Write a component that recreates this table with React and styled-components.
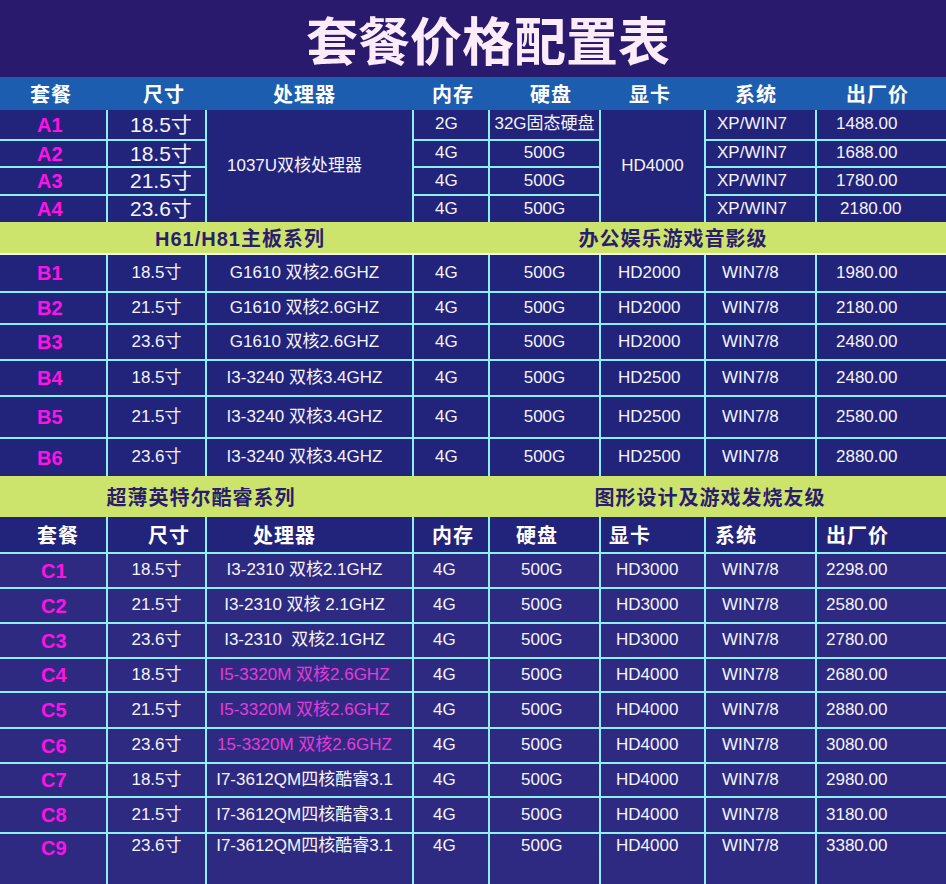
import React from 'react';
import styled, { createGlobalStyle } from 'styled-components';

const GlobalStyle = createGlobalStyle`
  html, body { margin: 0; padding: 0; background: #2a1a6e; }
  body { font-family: "Liberation Sans", "Noto Sans CJK SC", sans-serif; }
  * { box-sizing: border-box; }
`;

const COLS = '106px 97px 205px 74px 109px 103px 109px 129px';

const Page = styled.div`
  width: 946px;
  height: 884px;
  display: flex;
  flex-direction: column;
  overflow: hidden;
  background: #2a1a6e;
`;

const Title = styled.h1`
  margin: 0;
  height: 77px;
  flex: none;
  display: flex;
  align-items: center;
  justify-content: center;
  padding-left: 30px;
  font-family: "Noto Sans CJK SC", sans-serif;
  font-weight: 700;
  font-size: 52px;
  line-height: 1;
  color: #fcecf9;
`;

const HeadBand = styled.div`
  flex: none;
  display: grid;
  grid-template-columns: ${COLS};
  column-gap: 2px;
  height: 33px;
  background: #1c5daf;
`;

const Grid = styled.div`
  flex: none;
  display: grid;
  grid-template-columns: ${COLS};
  grid-template-rows: ${(p) => p.$rows};
  gap: 2px;
  background: #8df0f3;
`;

const Cell = styled.div`
  display: flex;
  align-items: ${(p) => (p.$top ? 'flex-start' : 'center')};
  justify-content: ${(p) => (p.$pl == null ? 'center' : 'flex-start')};
  padding-left: ${(p) => p.$pl ?? 0}px;
  padding-right: ${(p) => p.$pr ?? 0}px;
  padding-top: ${(p) => (p.$top ? 2 : 0)}px;
  background: ${(p) => p.$bg || '#22237b'};
  grid-row: ${(p) => (p.$span ? `span ${p.$span}` : 'auto')};
  white-space: pre;
  line-height: 1.2;
`;

const Code = styled(Cell)`
  font-family: "Liberation Sans", sans-serif;
  font-weight: 700;
  font-size: 20px;
  color: #ff12e4;
`;

const Value = styled(Cell)`
  font-family: "Liberation Sans", "Noto Sans CJK SC", sans-serif;
  font-size: ${(p) => (p.$big ? 21 : 17)}px;
  color: ${(p) => (p.$pink ? '#e63ad8' : '#f4f4fb')};
`;

const HeadCell = styled(Cell)`
  background: ${(p) => p.$bg || 'transparent'};
  font-family: "Noto Sans CJK SC", sans-serif;
  font-weight: 700;
  font-size: 20px;
  letter-spacing: 1px;
  color: #ffffff;
`;

const Band = styled.div`
  flex: none;
  display: grid;
  grid-template-columns: ${(p) => p.$split}px 1fr;
  height: ${(p) => p.$h}px;
  background: #cde46c;
  border-bottom: ${(p) => (p.$line ? '2px solid #f3f8e4' : 'none')};
`;

const BandText = styled.div`
  display: flex;
  align-items: center;
  justify-content: center;
  padding-left: ${(p) => p.$pl || 0}px;
  padding-right: ${(p) => p.$pr || 0}px;
  font-family: "Liberation Sans", "Noto Sans CJK SC", sans-serif;
  font-weight: 700;
  font-size: 20px;
  letter-spacing: 1px;
  color: #2b1c6e;
`;

const headA = [
  ['套餐', 30], ['尺寸', 35], ['处理器', 66], ['内存', 18],
  ['硬盘', 40], ['显卡', 28], ['系统', 29], ['出厂价', 29],
];

const headC = [
  ['套餐', 37], ['尺寸', 40], ['处理器', 46], ['内存', 18],
  ['硬盘', 26], ['显卡', 8], ['系统', 9], ['出厂价', 9],
];

const aRows = [
  ['A1', '18.5寸', '2G', '32G固态硬盘', 'XP/WIN7', '1488.00'],
  ['A2', '18.5寸', '4G', '500G', 'XP/WIN7', '1688.00'],
  ['A3', '21.5寸', '4G', '500G', 'XP/WIN7', '1780.00'],
  ['A4', '23.6寸', '4G', '500G', 'XP/WIN7', '2180.00'],
];

const bRows = [
  ['B1', '18.5寸', 'G1610 双核2.6GHZ', '4G', '500G', 'HD2000', 'WIN7/8', '1980.00'],
  ['B2', '21.5寸', 'G1610 双核2.6GHZ', '4G', '500G', 'HD2000', 'WIN7/8', '2180.00'],
  ['B3', '23.6寸', 'G1610 双核2.6GHZ', '4G', '500G', 'HD2000', 'WIN7/8', '2480.00'],
  ['B4', '18.5寸', 'I3-3240 双核3.4GHZ', '4G', '500G', 'HD2500', 'WIN7/8', '2480.00'],
  ['B5', '21.5寸', 'I3-3240 双核3.4GHZ', '4G', '500G', 'HD2500', 'WIN7/8', '2580.00'],
  ['B6', '23.6寸', 'I3-3240 双核3.4GHZ', '4G', '500G', 'HD2500', 'WIN7/8', '2880.00'],
];

const cRows = [
  ['C1', '18.5寸', 'I3-2310 双核2.1GHZ', '4G', '500G', 'HD3000', 'WIN7/8', '2298.00'],
  ['C2', '21.5寸', 'I3-2310 双核 2.1GHZ', '4G', '500G', 'HD3000', 'WIN7/8', '2580.00'],
  ['C3', '23.6寸', 'I3-2310  双核2.1GHZ', '4G', '500G', 'HD3000', 'WIN7/8', '2780.00'],
  ['C4', '18.5寸', 'I5-3320M 双核2.6GHZ', '4G', '500G', 'HD4000', 'WIN7/8', '2680.00', true],
  ['C5', '21.5寸', 'I5-3320M 双核2.6GHZ', '4G', '500G', 'HD4000', 'WIN7/8', '2880.00', true],
  ['C6', '23.6寸', '15-3320M 双核2.6GHZ', '4G', '500G', 'HD4000', 'WIN7/8', '3080.00', true],
  ['C7', '18.5寸', 'I7-3612QM四核酷睿3.1', '4G', '500G', 'HD4000', 'WIN7/8', '2980.00'],
  ['C8', '21.5寸', 'I7-3612QM四核酷睿3.1', '4G', '500G', 'HD4000', 'WIN7/8', '3180.00'],
  ['C9', '23.6寸', 'I7-3612QM四核酷睿3.1', '4G', '500G', 'HD4000', 'WIN7/8', '3380.00'],
];

const C_BG = '#2f2a81';

export default function App() {
  return (
    <Page>
      <GlobalStyle />
      <Title>套餐价格配置表</Title>

      <HeadBand>
        {headA.map(([t, pl]) => (
          <HeadCell key={t} $pl={pl}>{t}</HeadCell>
        ))}
      </HeadBand>

      <Grid $rows="29px 25px 26px 26px">
        {aRows.map((r, i) => (
          <React.Fragment key={r[0]}>
            <Code $pl={37}>{r[0]}</Code>
            <Value $pl={22} $big>{r[1]}</Value>
            {i === 0 && <Value $span={4} $pl={20}>1037U双核处理器</Value>}
            <Value $pl={21}>{r[2]}</Value>
            <Value>{r[3]}</Value>
            {i === 0 && <Value $span={4}>HD4000</Value>}
            <Value $pl={11}>{r[4]}</Value>
            <Value $pl={19 + (i === 3 ? 4 : 0)}>{r[5]}</Value>
          </React.Fragment>
        ))}
      </Grid>

      <Band $split={480} $h={33} $line>
        <BandText>H61/H81主板系列</BandText>
        <BandText $pr={80}>办公娱乐游戏音影级</BandText>
      </Band>

      <Grid $rows="36px 30px 34px 34px 40px 37px">
        {bRows.map((r) => (
          <React.Fragment key={r[0]}>
            <Code $pl={37}>{r[0]}</Code>
            <Value>{r[1]}</Value>
            <Value $pr={10}>{r[2]}</Value>
            <Value $pl={21}>{r[3]}</Value>
            <Value>{r[4]}</Value>
            <Value $pl={17}>{r[5]}</Value>
            <Value $pl={16}>{r[6]}</Value>
            <Value $pl={19}>{r[7]}</Value>
          </React.Fragment>
        ))}
      </Grid>

      <Band $split={402} $h={41}>
        <BandText>超薄英特尔酷睿系列</BandText>
        <BandText $pl={72}>图形设计及游戏发烧友级</BandText>
      </Band>

      <Grid $rows="35px 33px 33px 33px 32px 34px 33px 32px 34px 50px">
        {headC.map(([t, pl]) => (
          <HeadCell key={t} $pl={pl} $bg="#22237b">{t}</HeadCell>
        ))}
        {cRows.map((r) => {
          const top = r[0] === 'C9';
          return (
            <React.Fragment key={r[0]}>
              <Code $pl={41} $bg={C_BG} $top={top}>{r[0]}</Code>
              <Value $bg={C_BG} $top={top}>{r[1]}</Value>
              <Value $bg={C_BG} $top={top} $pr={10} $pink={r[8]}>{r[2]}</Value>
              <Value $bg={C_BG} $top={top} $pl={19}>{r[3]}</Value>
              <Value $bg={C_BG} $top={top} $pl={31}>{r[4]}</Value>
              <Value $bg={C_BG} $top={top} $pl={15}>{r[5]}</Value>
              <Value $bg={C_BG} $top={top} $pl={16}>{r[6]}</Value>
              <Value $bg={C_BG} $top={top} $pl={9}>{r[7]}</Value>
            </React.Fragment>
          );
        })}
      </Grid>
    </Page>
  );
}
